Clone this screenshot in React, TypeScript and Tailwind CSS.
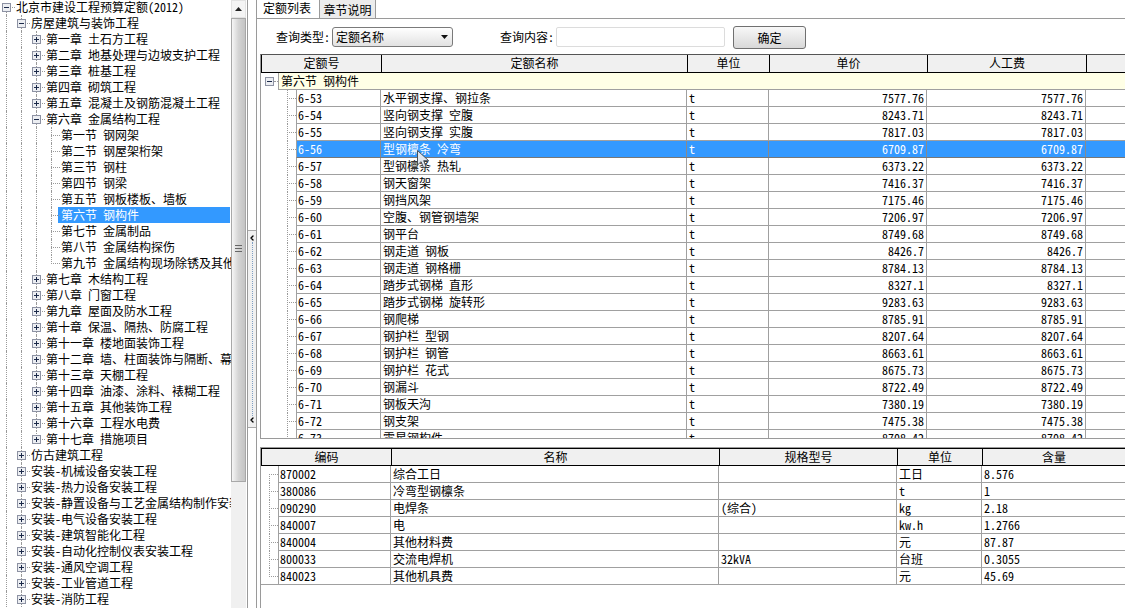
import React from "react";
import { ChevronLeft } from "lucide-react";

type TreeNode = { level: number; label: string; open?: boolean; last?: boolean; selected?: boolean };

const tree: TreeNode[] = [
  { level: 0, label: "北京市建设工程预算定额(2012)", open: true },
  { level: 1, label: "房屋建筑与装饰工程", open: true },
  { level: 2, label: "第一章 土石方工程", open: false },
  { level: 2, label: "第二章 地基处理与边坡支护工程", open: false },
  { level: 2, label: "第三章 桩基工程", open: false },
  { level: 2, label: "第四章 砌筑工程", open: false },
  { level: 2, label: "第五章 混凝土及钢筋混凝土工程", open: false },
  { level: 2, label: "第六章 金属结构工程", open: true },
  { level: 3, label: "第一节 钢网架" },
  { level: 3, label: "第二节 钢屋架桁架" },
  { level: 3, label: "第三节 钢柱" },
  { level: 3, label: "第四节 钢梁" },
  { level: 3, label: "第五节 钢板楼板、墙板" },
  { level: 3, label: "第六节 钢构件", selected: true },
  { level: 3, label: "第七节 金属制品" },
  { level: 3, label: "第八节 金属结构探伤" },
  { level: 3, label: "第九节 金属结构现场除锈及其他", last: true },
  { level: 2, label: "第七章 木结构工程", open: false },
  { level: 2, label: "第八章 门窗工程", open: false },
  { level: 2, label: "第九章 屋面及防水工程", open: false },
  { level: 2, label: "第十章 保温、隔热、防腐工程", open: false },
  { level: 2, label: "第十一章 楼地面装饰工程", open: false },
  { level: 2, label: "第十二章 墙、柱面装饰与隔断、幕墙工程", open: false },
  { level: 2, label: "第十三章 天棚工程", open: false },
  { level: 2, label: "第十四章 油漆、涂料、裱糊工程", open: false },
  { level: 2, label: "第十五章 其他装饰工程", open: false },
  { level: 2, label: "第十六章 工程水电费", open: false },
  { level: 2, label: "第十七章 措施项目", open: false, last: true },
  { level: 1, label: "仿古建筑工程", open: false },
  { level: 1, label: "安装-机械设备安装工程", open: false },
  { level: 1, label: "安装-热力设备安装工程", open: false },
  { level: 1, label: "安装-静置设备与工艺金属结构制作安装工程", open: false },
  { level: 1, label: "安装-电气设备安装工程", open: false },
  { level: 1, label: "安装-建筑智能化工程", open: false },
  { level: 1, label: "安装-自动化控制仪表安装工程", open: false },
  { level: 1, label: "安装-通风空调工程", open: false },
  { level: 1, label: "安装-工业管道工程", open: false },
  { level: 1, label: "安装-消防工程", open: false },
];

const quotas = [
  ["6-53", "水平钢支撑、钢拉条", "7577.76"],
  ["6-54", "竖向钢支撑 空腹", "8243.71"],
  ["6-55", "竖向钢支撑 实腹", "7817.03"],
  ["6-56", "型钢檩条 冷弯", "6709.87"],
  ["6-57", "型钢檩条 热轧", "6373.22"],
  ["6-58", "钢天窗架", "7416.37"],
  ["6-59", "钢挡风架", "7175.46"],
  ["6-60", "空腹、钢管钢墙架", "7206.97"],
  ["6-61", "钢平台", "8749.68"],
  ["6-62", "钢走道 钢板", "8426.7"],
  ["6-63", "钢走道 钢格栅", "8784.13"],
  ["6-64", "踏步式钢梯 直形", "8327.1"],
  ["6-65", "踏步式钢梯 旋转形", "9283.63"],
  ["6-66", "钢爬梯", "8785.91"],
  ["6-67", "钢护栏 型钢", "8207.64"],
  ["6-68", "钢护栏 钢管", "8663.61"],
  ["6-69", "钢护栏 花式", "8675.73"],
  ["6-70", "钢漏斗", "8722.49"],
  ["6-71", "钢板天沟", "7380.19"],
  ["6-72", "钢支架", "7475.38"],
  ["6-73", "零星钢构件", "8708.42"],
];

const materials = [
  ["870002", "综合工日", "", "工日", "8.576"],
  ["380086", "冷弯型钢檩条", "", "t", "1"],
  ["090290", "电焊条", "(综合)", "kg", "2.18"],
  ["840007", "电", "", "kw.h", "1.2766"],
  ["840004", "其他材料费", "", "元", "87.87"],
  ["800033", "交流电焊机", "32kVA", "台班", "0.3055"],
  ["840023", "其他机具费", "", "元", "45.69"],
];

function ExpandBox({ open }: { open: boolean }) {
  return (
    <svg width="9" height="9" viewBox="0 0 9 9" className="block">
      <rect x="0.5" y="0.5" width="8" height="8" fill="#eceef2" stroke="#8d92a3" />
      <path d={open ? "M2 4.5h5" : "M2 4.5h5M4.5 2v5"} stroke="#1c2a4a" fill="none" />
    </svg>
  );
}

function TreeRow({ node }: { node: TreeNode }) {
  const guides = Array.from({ length: node.level });
  return (
    <div className="flex h-4 items-center whitespace-nowrap">
      {guides.map((_, i) => (
        <span key={i} className="h-full w-[15px] shrink-0 pl-[6px]">
          <span className="block h-full border-l border-dotted border-[#9a9a9a]" />
        </span>
      ))}
      <span className="relative h-full w-[15px] shrink-0">
        <span
          className={`absolute left-[6px] border-l border-dotted border-[#9a9a9a] ${
            node.last ? "top-0 h-[9px]" : node.level === 0 ? "top-[8px] h-[8px]" : "top-0 h-full"
          }`}
        />
        <span className="absolute left-[6px] top-[8px] w-[9px] border-t border-dotted border-[#9a9a9a]" />
        {node.open !== undefined && (
          <span className="absolute left-[2px] top-[4px]">
            <ExpandBox open={node.open} />
          </span>
        )}
      </span>
      {node.selected ? (
        <span className="-ml-[2px] mr-px h-full flex-1 bg-[#3399ff] pl-[3px] text-white">{node.label}</span>
      ) : (
        <span className="ml-px">{node.label}</span>
      )}
    </div>
  );
}

function HeadCell({ className, children }: { className: string; children?: React.ReactNode }) {
  return <div className={`h-full border-r border-black text-center ${className}`}>{children}</div>;
}

function UpperRow({ row, selected }: { row: string[]; selected: boolean }) {
  const cell = selected
    ? "h-full border-r border-[#8a8a8a] text-white"
    : "h-full border-r border-[#a0a0a0] text-black";
  return (
    <div className="flex h-[17px] shrink-0">
      <div className="relative h-full w-[35px] shrink-0">
        <span className="absolute left-[26px] top-0 h-full border-l border-dotted border-[#9a9a9a]" />
        <span className="absolute left-[26px] top-[8px] w-[9px] border-t border-dotted border-[#9a9a9a]" />
      </div>
      <div
        className={`flex h-full flex-1 border-b border-l ${
          selected ? "border-b-[#777777] border-l-[#a0a0a0] bg-[#3399ff]" : "border-[#a0a0a0]"
        }`}
      >
        <div className={`w-[84px] pl-[1px] ${cell}`}>{row[0]}</div>
        <div className={`w-[306px] pl-[2px] ${cell}`}>{row[1]}</div>
        <div className={`w-[82px] pl-[2px] ${cell}`}>t</div>
        <div className={`w-[158px] pr-[2px] text-right ${cell}`}>{row[2]}</div>
        <div className={`w-[159px] pr-[2px] text-right ${cell}`}>{row[2]}</div>
      </div>
    </div>
  );
}

function LowerRow({ row, index }: { row: string[]; index: number }) {
  const isLast = index === materials.length - 1;
  return (
    <div className="flex h-[17px] shrink-0">
      <div className={`relative h-full w-[17px] shrink-0 ${isLast ? "border-b border-[#a0a0a0]" : ""}`}>
        <span
          className={`absolute left-[8px] border-l border-dotted border-[#9a9a9a] ${
            index === 0 ? "top-[8px] h-[9px]" : isLast ? "top-0 h-[9px]" : "top-0 h-full"
          }`}
        />
        <span className="absolute left-[8px] top-[8px] w-[9px] border-t border-dotted border-[#9a9a9a]" />
      </div>
      <div className="flex h-full flex-1 border-b border-l border-[#a0a0a0]">
        <div className="h-full w-[112px] border-r border-[#a0a0a0] pl-[1px]">{row[0]}</div>
        <div className="h-full w-[328px] border-r border-[#a0a0a0] pl-[2px]">{row[1]}</div>
        <div className="h-full w-[178px] border-r border-[#a0a0a0] pl-[2px]">{row[2]}</div>
        <div className="h-full w-[85px] border-r border-[#a0a0a0] pl-[2px]">{row[3]}</div>
        <div className="h-full flex-1 pl-[2px]">{row[4]}</div>
      </div>
    </div>
  );
}

export default function App() {
  return (
    <div className="flex h-[608px] w-[1125px] overflow-hidden bg-white font-['Noto_Sans_CJK_SC','Liberation_Sans',sans-serif] text-[12px] leading-4 text-black [font-feature-settings:'hwid']">
      {/* chapter tree */}
      <div className="-mt-px h-[609px] w-[231px] shrink-0 overflow-hidden">
        {tree.map((node) => (
          <TreeRow key={node.label} node={node} />
        ))}
      </div>

      {/* tree scrollbar */}
      <div className="flex h-full w-[15px] shrink-0 flex-col bg-[#f0f0f0]">
        <div className="flex h-[18px] shrink-0 items-center justify-center border border-[#e2e2e2] bg-[#f4f4f4]">
          <svg width="7" height="4" viewBox="0 0 7 4">
            <path d="M3.5 0L7 4H0z" fill="#222222" />
          </svg>
        </div>
        <div className="flex h-[464px] shrink-0 flex-col items-center border border-[#a8a8a8] bg-gradient-to-r from-[#f6f6f6] via-[#d4d4d4] to-[#c4c4c4] pt-[226px]">
          <span className="mb-[2px] h-px w-[7px] bg-[#666666]" />
          <span className="mb-[2px] h-px w-[7px] bg-[#666666]" />
          <span className="h-px w-[7px] bg-[#666666]" />
        </div>
      </div>
      <div className="h-full w-px shrink-0 bg-white" />

      {/* collapse splitter */}
      <div className="flex h-full w-[10px] shrink-0 flex-col border-x border-[#9a9a9a] pt-[230px]">
        <div className="flex h-[198px] flex-col items-center justify-between border-y border-[#a8a8a8] bg-[#f0f0f0] py-[3px]">
          <ChevronLeft size={8} strokeWidth={4} className="text-black" />
          <span className="w-0 flex-1 border-l border-dotted border-[#7f9fc4]" />
          <ChevronLeft size={8} strokeWidth={4} className="text-black" />
        </div>
      </div>

      {/* right panel */}
      <div className="flex h-full flex-1 flex-col overflow-hidden">
        <div className="flex h-[19px] shrink-0 items-stretch border-b border-[#9a9a9a] pl-[6px]">
          <div className="w-[50px]">定额列表</div>
          <div className="ml-[6px] w-[57px] border-x border-[#9a9a9a] bg-[#ececec] pt-[2px] text-center">章节说明</div>
        </div>

        <div className="flex h-[35px] shrink-0 items-start pl-[19px] pt-[7px]">
          <label className="mt-[3px] w-[56px]">查询类型:</label>
          <div className="mt-px flex h-[20px] w-[121px] items-center justify-between rounded-[3px] border border-[#7a7a7a] bg-gradient-to-b from-[#ffffff] to-[#e2e2e2] pl-[3px] pr-[4px]">
            <span>定额名称</span>
            <svg width="7" height="4" viewBox="0 0 7 4">
              <path d="M0 0h7L3.5 4z" fill="#111111" />
            </svg>
          </div>
          <label className="ml-[47px] mt-[3px] w-[56px]">查询内容:</label>
          <div className="mt-px h-[20px] w-[169px] rounded-[2px] border border-[#dcdcdc]" />
          <button className="ml-[8px] flex h-[23px] w-[73px] items-center justify-center rounded-[3px] border border-[#707070] bg-gradient-to-b from-[#f8f8f8] to-[#d8d8d8]">
            确定
          </button>
        </div>

        {/* quota grid */}
        <div className="relative ml-[3px] flex h-[385px] shrink-0 flex-col overflow-hidden border-b border-l border-t border-b-[#9a9a9a] border-l-[#9a9a9a] border-t-[#555555]">
          <div className="flex h-[18px] shrink-0 border-b border-l border-black bg-[#f0f0f0]">
            <HeadCell className="w-[120px]">定额号</HeadCell>
            <HeadCell className="w-[306px]">定额名称</HeadCell>
            <HeadCell className="w-[82px]">单位</HeadCell>
            <HeadCell className="w-[158px]">单价</HeadCell>
            <HeadCell className="w-[159px]">人工费</HeadCell>
          </div>
          <div className="flex h-[17px] shrink-0">
            <div className="relative h-full w-[17px] shrink-0">
              <span className="absolute left-[4px] top-[4px]">
                <ExpandBox open />
              </span>
              <span className="absolute left-[13px] top-[8px] w-[4px] border-t border-dotted border-[#9a9a9a]" />
            </div>
            <div className="h-full flex-1 border-b border-l border-[#a0a0a0] bg-[#ffffe6] pl-[2px]">第六节 钢构件</div>
          </div>
          {quotas.map((row) => (
            <UpperRow key={row[0]} row={row} selected={row[0] === "6-56"} />
          ))}
          <svg width="13" height="19" viewBox="0 0 13 19" className="absolute left-[156px] top-[95px]">
            <path d="M0.5 0.5V15l3.6-3.3 2.4 6 2.6-1-2.4-6h5z" fill="#dfe6ee" stroke="#4a5058" />
          </svg>
        </div>

        {/* material grid */}
        <div className="ml-[3px] mt-[8px] flex flex-1 flex-col border-l border-t border-[#9a9a9a]">
          <div className="flex h-[18px] shrink-0 border-b border-l border-t border-black bg-[#f0f0f0]">
            <HeadCell className="w-[130px]">编码</HeadCell>
            <HeadCell className="w-[328px]">名称</HeadCell>
            <HeadCell className="w-[178px]">规格型号</HeadCell>
            <HeadCell className="w-[85px]">单位</HeadCell>
            <div className="h-full flex-1 text-center">含量</div>
          </div>
          {materials.map((row, i) => (
            <LowerRow key={row[0]} row={row} index={i} />
          ))}
        </div>
      </div>
    </div>
  );
}
